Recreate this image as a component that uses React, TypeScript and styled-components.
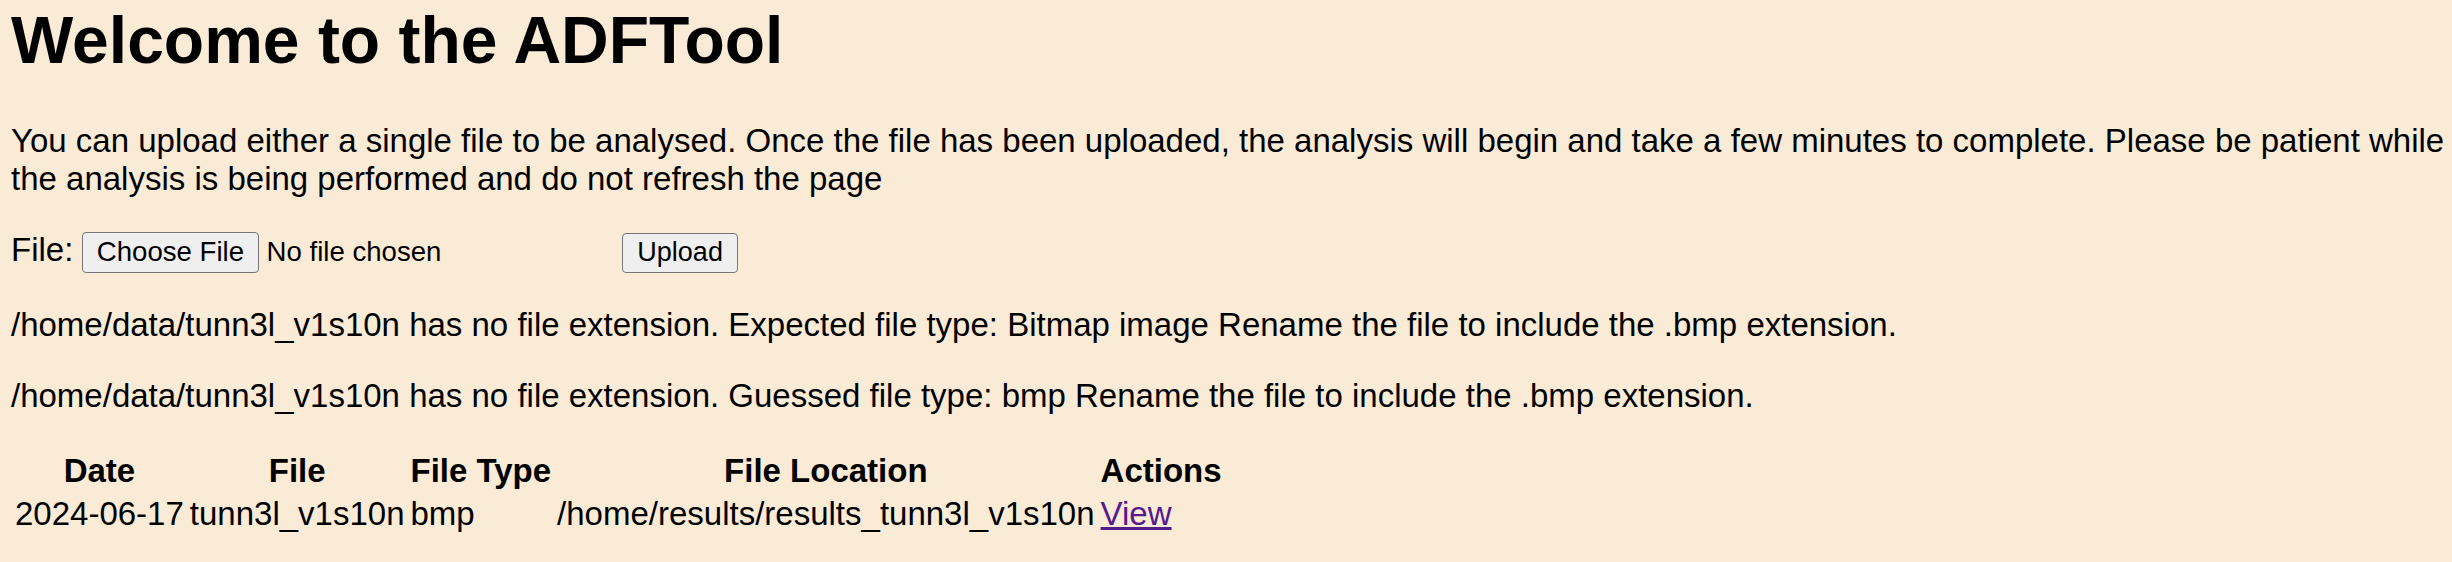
import React from "react";
import styled, { createGlobalStyle } from "styled-components";

const GlobalStyle = createGlobalStyle`
  html, body {
    margin: 0;
    padding: 0;
    background: #faebd7;
  }
  body {
    font-family: "Liberation Sans", Arial, sans-serif;
    color: #000;
  }
`;

const Page = styled.main`
  padding: 0 0 0 11px;
  font-size: 33px;
  line-height: normal;
`;

const Title = styled.h1`
  margin: 2px 0 44px;
  font-size: 66px;
  font-weight: bold;
  line-height: normal;
`;

const Paragraph = styled.p`
  margin: 33px 0;
`;

const UploadForm = styled.form`
  margin: 33px 0;
  display: flex;
  align-items: baseline;
  gap: 9px;
`;

const FieldLabel = styled.span``;

const FilePicker = styled.label`
  flex: none;
  width: 531px;
  display: inline-flex;
  align-items: baseline;
  gap: 8px;
  font-size: 27.6px;
  cursor: default;
`;

const HiddenInput = styled.input`
  position: absolute;
  width: 1px;
  height: 1px;
  opacity: 0;
  pointer-events: none;
`;

const NativeButton = styled.button<{ $size?: number; $padX?: number }>`
  font-family: "Liberation Sans", Arial, sans-serif;
  font-size: ${(p) => p.$size ?? 27}px;
  line-height: normal;
  padding: 3.5px ${(p) => p.$padX ?? 14}px;
  border: 1px solid #767676;
  border-radius: 4px;
  background: #efefef;
  color: #000;
  flex: none;
`;

const FakeButton = styled(NativeButton).attrs({ as: "span" })`
  display: inline-block;
`;

const StatusText = styled.span`
  white-space: nowrap;
`;

const Message = styled.p`
  margin: 33px 0;
`;

const ResultsTable = styled.table`
  margin: 33px 0 0 -0.5px;
  border-collapse: separate;
  border-spacing: 3px 3.5px;
  font-size: 33px;
`;

const HeadCell = styled.th`
  padding: 1.2px 1.5px;
  font-weight: bold;
  text-align: center;
`;

const Cell = styled.td`
  padding: 1.2px 1.5px;
  text-align: left;
`;

const ViewLink = styled.a`
  color: #551a8b;
  text-decoration: underline;
`;

const rows = [
  {
    date: "2024-06-17",
    file: "tunn3l_v1s10n",
    type: "bmp",
    location: "/home/results/results_tunn3l_v1s10n",
  },
];

export default function App() {
  return (
    <>
      <GlobalStyle />
      <Page>
        <Title>Welcome to the ADFTool</Title>
        <Paragraph>
          You can upload either a single file to be analysed. Once the file has
          been uploaded, the analysis will begin and take a few minutes to
          complete. Please be patient while the analysis is being performed and
          do not refresh the page
        </Paragraph>
        <UploadForm onSubmit={(e) => e.preventDefault()}>
          <FieldLabel>File:</FieldLabel>
          <FilePicker>
            <HiddenInput type="file" />
            <FakeButton $size={27.6} $padX={13.5}>
              Choose File
            </FakeButton>
            <StatusText>No file chosen</StatusText>
          </FilePicker>
          <NativeButton type="submit">Upload</NativeButton>
        </UploadForm>
        <Message>
          /home/data/tunn3l_v1s10n has no file extension. Expected file type:
          Bitmap image Rename the file to include the .bmp extension.
        </Message>
        <Message>
          /home/data/tunn3l_v1s10n has no file extension. Guessed file type: bmp
          Rename the file to include the .bmp extension.
        </Message>
        <ResultsTable>
          <thead>
            <tr>
              <HeadCell>Date</HeadCell>
              <HeadCell>File</HeadCell>
              <HeadCell>File Type</HeadCell>
              <HeadCell>File Location</HeadCell>
              <HeadCell>Actions</HeadCell>
            </tr>
          </thead>
          <tbody>
            {rows.map((r) => (
              <tr key={r.location}>
                <Cell>{r.date}</Cell>
                <Cell>{r.file}</Cell>
                <Cell>{r.type}</Cell>
                <Cell>{r.location}</Cell>
                <Cell>
                  <ViewLink href="#">View</ViewLink>
                </Cell>
              </tr>
            ))}
          </tbody>
        </ResultsTable>
      </Page>
    </>
  );
}
